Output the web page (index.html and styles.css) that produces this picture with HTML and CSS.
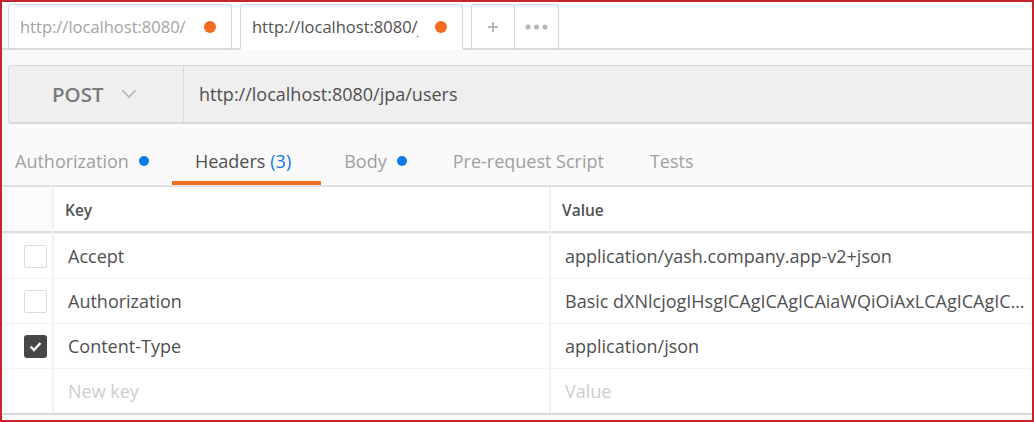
FILE: index.html
```html
<!DOCTYPE html>
<html lang="en">
<head>
<meta charset="utf-8">
<title>Postman request</title>
<link rel="stylesheet" href="styles.css">
</head>
<body>
<div class="frame">
  <div class="tabbar">
    <div class="tab">
      <span class="tab-title">http://localhost:8080/</span>
      <span class="odot"></span>
    </div>
    <div class="tab active">
      <span class="tab-title">http://localhost:8080/jpa/users</span>
      <span class="odot"></span>
    </div>
    <div class="tab icon-tab">
      <svg width="12" height="12" viewBox="0 0 12 12"><path d="M6 1v10M1 6h10" stroke="#b8b8b8" stroke-width="2" fill="none"/></svg>
    </div>
    <div class="tab icon-tab more">
      <svg width="23" height="6" viewBox="0 0 23 6"><circle cx="3" cy="3" r="2.6" fill="#b8b8b8"/><circle cx="11.5" cy="3" r="2.6" fill="#b8b8b8"/><circle cx="20" cy="3" r="2.6" fill="#b8b8b8"/></svg>
    </div>
  </div>
  <div class="main">
    <div class="urlbar">
      <div class="method">
        <span>POST</span>
        <svg width="16" height="10" viewBox="0 0 16 10"><polyline points="1.5,1.5 8,8 14.5,1.5" fill="none" stroke="#b4b4b4" stroke-width="1.7"/></svg>
      </div>
      <div class="url">http://localhost:8080/jpa/users</div>
    </div>
    <div class="reqtabs">
      <div class="rtab first">Authorization <span class="bdot"></span></div>
      <div class="rtab active">Headers <span class="count">(3)</span></div>
      <div class="rtab">Body <span class="bdot"></span></div>
      <div class="rtab">Pre-request Script</div>
      <div class="rtab">Tests</div>
    </div>
    <div class="table">
      <div class="cell hcell cbcol"></div>
      <div class="cell hcell">Key</div>
      <div class="cell hcell">Value</div>

      <div class="cell cbcol"><span class="cb"></span></div>
      <div class="cell">Accept</div>
      <div class="cell"><span class="txt">application/yash.company.app-v2+json</span></div>

      <div class="cell cbcol"><span class="cb"></span></div>
      <div class="cell">Authorization</div>
      <div class="cell"><span class="txt">Basic dXNlcjogIHsgICAgICAgICAiaWQiOiAxLCAgICAgICAgICJuYW1lIjogInlhc2giIH0=</span></div>

      <div class="cell cbcol"><span class="cb checked"><svg width="23" height="23" viewBox="0 0 23 23"><polyline points="6.5,11.5 10,15 16.5,8" fill="none" stroke="#fff" stroke-width="2.4"/></svg></span></div>
      <div class="cell">Content-Type</div>
      <div class="cell"><span class="txt">application/json</span></div>

      <div class="cell cbcol"></div>
      <div class="cell placeholder">New key</div>
      <div class="cell placeholder">Value</div>
    </div>
  </div>
</div>
</body>
</html>
```

FILE: styles.css
```css
* { box-sizing: border-box; }

body {
  margin: 0;
  font-family: "Open Sans", "Liberation Sans", sans-serif;
}

.frame {
  width: 1034px;
  height: 422px;
  border: 2px solid #c5262d;
  overflow: hidden;
  background: #fff;
  display: flex;
  flex-direction: column;
}

/* top tab bar */
.tabbar {
  display: flex;
  height: 48px;
  padding: 2px 0 0 6px;
  background: #fff;
  border-bottom: 2px solid #dcdcdc;
  flex-shrink: 0;
}

.tab {
  width: 224px;
  height: 46px;
  margin-right: 8px;
  margin-bottom: -2px;
  border: 1px solid #d6d6d6;
  border-bottom: 2px solid #dcdcdc;
  border-radius: 3px 3px 0 0;
  background: #fff;
  display: flex;
  align-items: center;
  justify-content: space-between;
  padding: 0 15px 0 11px;
}

.tab.active {
  width: 223px;
  border-bottom-color: #fff;
}

.tab-title {
  width: 166px;
  overflow: hidden;
  white-space: nowrap;
  font-size: 16.5px;
  color: #a3a3a3;
}

.tab.active .tab-title { color: #505050; }

.odot {
  width: 12px;
  height: 12px;
  border-radius: 50%;
  background: #f26b21;
  flex-shrink: 0;
}

.tab.icon-tab {
  width: 44px;
  margin-right: 0;
  padding: 0;
  justify-content: center;
}

.tab.more { border-left: none; }

/* main area */
.main {
  flex: 1;
  background: #fafafa;
  display: flex;
  flex-direction: column;
}

.urlbar {
  margin: 15px -20px 0 6px;
  height: 59px;
  display: flex;
  background: #efefef;
  border: 1px solid #d9d9d9;
  border-bottom-width: 2px;
  border-radius: 3px;
  flex-shrink: 0;
}

.method {
  width: 175px;
  border-right: 1px solid #d9d9d9;
  display: flex;
  align-items: center;
  gap: 17px;
  padding-left: 43px;
  font-size: 20.5px;
  font-weight: 600;
  color: #7a7a7a;
}

.url {
  display: flex;
  align-items: center;
  padding-left: 15px;
  font-size: 18px;
  color: #505050;
}

/* request tabs */
.reqtabs {
  display: flex;
  margin-top: 16px;
  border-bottom: 2px solid #e2e2e2;
  flex-shrink: 0;
}

.rtab {
  height: 45px;
  padding: 0 23px;
  display: flex;
  align-items: center;
  gap: 10px;
  font-size: 18px;
  color: #a0a0a0;
  border-bottom: 4px solid transparent;
  white-space: nowrap;
}

.rtab.first { padding-left: 13px; }

.rtab.active {
  color: #505050;
  border-bottom-color: #f07026;
  gap: 5px;
  padding-right: 30px;
}

.count { color: #1576e0; }

.bdot {
  width: 10px;
  height: 10px;
  border-radius: 50%;
  background: #0b7ae8;
}

/* headers table */
.table {
  display: grid;
  grid-template-columns: 50px 495px 1fr;
  grid-template-rows: 46px repeat(4, 44px);
  column-gap: 2px;
  row-gap: 1px;
  background: #f2f2f2;
  border-bottom: 2px solid #d9d9d9;
}

.cell {
  display: flex;
  align-items: center;
  background: #fff;
  padding-left: 14px;
  font-size: 18px;
  color: #505050;
  white-space: nowrap;
  overflow: hidden;
  min-width: 0;
}

.hcell {
  padding-left: 11px;
  padding-top: 1px;
  font-size: 15.5px;
  font-weight: 600;
  border-bottom: 2px solid #dedede;
}

.cell.cbcol {
  padding-left: 22px;
}

.hcell.cbcol { background: #fbfbfb; }

.txt {
  overflow: hidden;
  text-overflow: ellipsis;
  white-space: nowrap;
  min-width: 0;
}

.placeholder { color: #cdcdcd; }

.cb {
  width: 23px;
  height: 23px;
  border: 1px solid #dcdcdc;
  border-radius: 2px;
  background: #fff;
  display: block;
  flex-shrink: 0;
}

.cb.checked {
  background: #474747;
  border: none;
  border-radius: 3px;
}

.cb svg { display: block; }
```
